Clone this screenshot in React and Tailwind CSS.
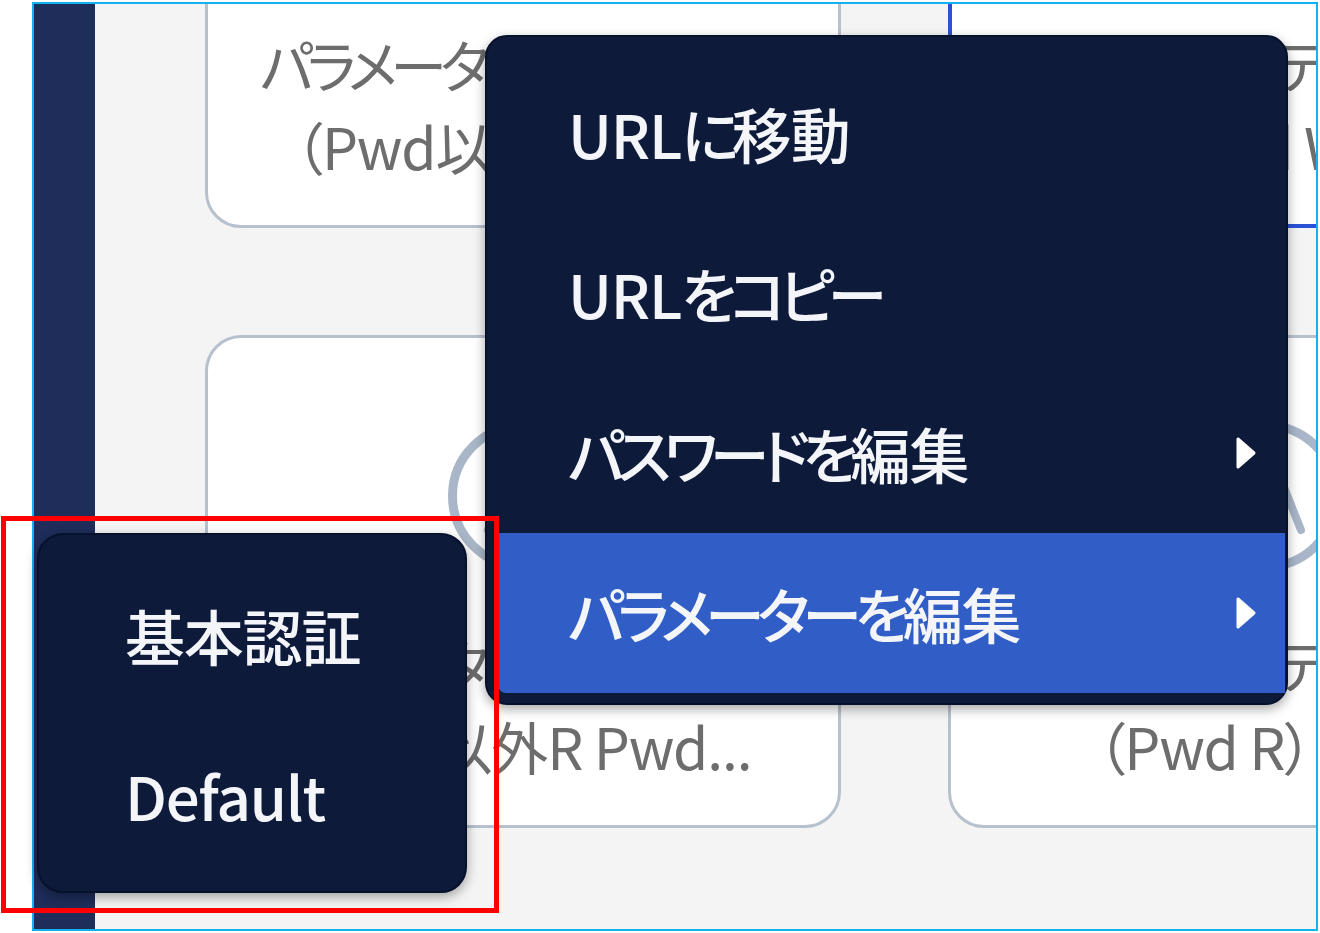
import React from "react";

const cards = [
  { title: "パラメーターテストサイト", sub: "（Pwd以外R Pwd..." },
  { title: "パラメーターテストサイト", sub: "（Pwd W）", selected: true },
  { title: "パラメーターテストサイト", sub: "（Pwd以外R Pwd..." },
  { title: "パラメーターテストサイト", sub: "（Pwd R） 検証" },
];

const menuItems = [
  { label: "URLに移動" },
  { label: "URLをコピー" },
  { label: "パスワードを編集", sub: true },
  { label: "パラメーターを編集", sub: true, active: true },
];

// kana in the original UI font is set narrower than in Noto
function Txt({ text }) {
  const parts = text.match(/[\u3041-\u30ff]+|[^\u3041-\u30ff]+/g) || [];
  return parts.map((p, i) =>
    /[\u3041-\u30ff]/.test(p) ? (
      <span key={i} className="tracking-[-0.12em]">{p}</span>
    ) : (
      <span key={i} className="tracking-[-0.02em]">{p}</span>
    )
  );
}

export default function App() {
  return (
    <div className="relative h-[933px] w-[1320px] overflow-hidden bg-white font-['Noto_Sans_CJK_JP','Noto_Sans',sans-serif] [font-feature-settings:'palt']">
      <div className="ml-[32px] mt-[2px] flex h-[929px] w-[1286px] border-2 border-[#12b2ee]">
        <div className="w-[61px] shrink-0 bg-[#1e2d5a]" />
        <div className="flex-1 overflow-hidden bg-[#f4f4f4]">
          <div className="ml-[110px] mt-[-269px] grid w-max grid-cols-[636px_636px] gap-x-[107px] gap-y-[107px]">
            {cards.map((c, i) => (
              <Card key={i} {...c} />
            ))}
          </div>
        </div>
      </div>

      <ContextMenu />
      <SubMenu />

      {/* annotation */}
      <div className="pointer-events-none absolute left-[1px] top-[516px] h-[397px] w-[498px] border-[5px] border-[#ff0000]" />
    </div>
  );
}

function Card({ title, sub, selected }) {
  return (
    <div
      className={`flex h-[493px] flex-col items-center rounded-[36px] bg-white text-[57px] leading-[82px] text-[#6d6d6d] ${
        selected ? "border-4 border-[#2a52d6] pt-[82px]" : "border-[3px] border-[#b7c1cd] pt-[83px]"
      }`}
    >
      <RingIcon />
      <p className="mt-[51px] whitespace-nowrap">
        <Txt text={title} />
      </p>
      <p className="whitespace-nowrap">
        <Txt text={sub} />
      </p>
    </div>
  );
}

function RingIcon() {
  return (
    <div className="flex h-[150px] w-[150px] shrink-0 items-center justify-center rounded-full border-[9px] border-[#a9b6c8]">
      <svg width="132" height="132" viewBox="0 0 132 132" fill="none" stroke="#a9b6c8" strokeWidth="8" strokeLinecap="round" strokeLinejoin="round">
        <path d="M66 12 L101 100 M66 12 L31 100" />
      </svg>
    </div>
  );
}

function Arrow() {
  return (
    <svg width="22" height="34" viewBox="0 0 22 34" className="shrink-0">
      <path d="M3 3 L19 17 L3 31 Z" fill="#ffffff" stroke="#ffffff" strokeWidth="3" strokeLinejoin="round" />
    </svg>
  );
}

function ContextMenu() {
  return (
    <div className="absolute left-[485px] top-[35px] w-[803px] rounded-[22px] border-2 border-[#06112b] bg-[#0d1a3a] pb-[10px] pl-[11px] pr-[1px] pt-[16px] shadow-[0_4px_12px_rgba(0,0,0,0.35)]">
      {menuItems.map((m) => (
        <div
          key={m.label}
          className={`flex h-[160px] items-center justify-between pl-[70px] pr-[28px] text-[60px] font-medium text-[#f3f5f9] ${
            m.active ? "rounded-bl-[8px] bg-[#305dc6]" : ""
          }`}
        >
          <span className="whitespace-nowrap">
            <Txt text={m.label} />
          </span>
          {m.sub && <Arrow />}
        </div>
      ))}
    </div>
  );
}

function SubMenu() {
  return (
    <div className="absolute left-[37px] top-[533px] w-[430px] rounded-[26px] border-2 border-[#06112b] bg-[#0d1a3a] pb-[16px] pt-[20px] shadow-[0_4px_12px_rgba(0,0,0,0.35)]">
      {["基本認証", "Default"].map((t) => (
        <div key={t} className="flex h-[160px] items-center pl-[86px] text-[60px] font-medium text-[#f3f5f9]">
          <span className="whitespace-nowrap">
            <Txt text={t} />
          </span>
        </div>
      ))}
    </div>
  );
}
